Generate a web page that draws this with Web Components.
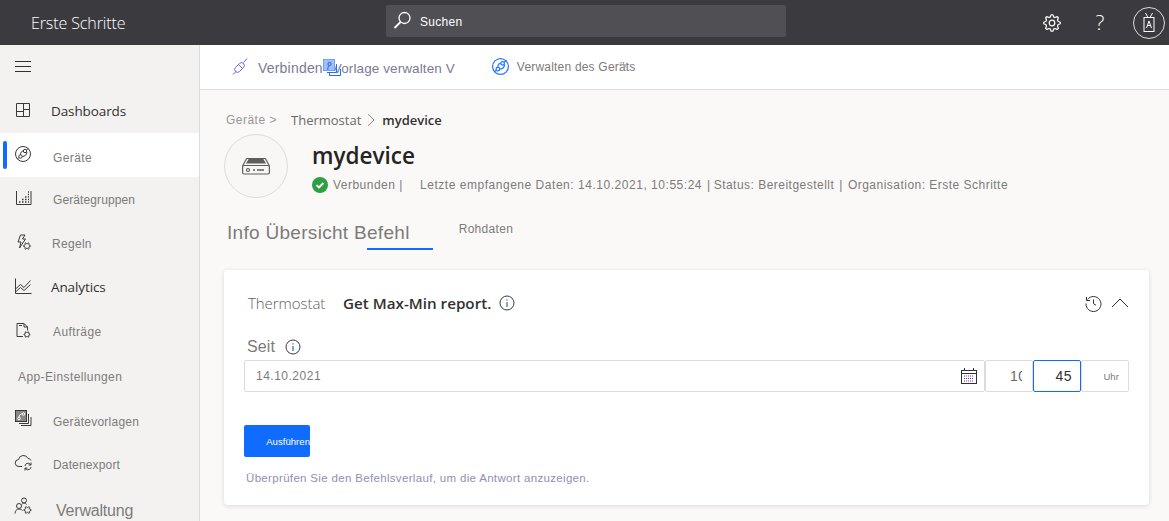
<!DOCTYPE html>
<html lang="de">
<head>
<meta charset="utf-8">
<title>Thermostat mydevice</title>
<style>
  html,body{ margin:0; height:100%; overflow:hidden; }
  body{ font-family:"Liberation Sans",Arial,sans-serif; background:#faf9f8; }
</style>
</head>
<body>
<app-shell>
  <app-header slot="header" title-text="Erste Schritte"></app-header>
  <side-nav slot="nav">
    <nav-item icon="dash" kind="main" pad="51">Dashboards</nav-item>
    <nav-item icon="device" active pad="53" drop="5">Geräte</nav-item>
    <nav-item icon="groups" pad="53" drop="2" style="letter-spacing:.1px">Gerätegruppen</nav-item>
    <nav-item icon="rules" pad="52" drop="2" style="letter-spacing:.3px">Regeln</nav-item>
    <nav-item icon="chart" kind="main" pad="51">Analytics</nav-item>
    <nav-item icon="jobs" pad="53" drop="2">Aufträge</nav-item>
    <nav-item kind="head" pad="18" drop="4">App-Einstellungen</nav-item>
    <nav-item icon="templates" pad="53" drop="5" style="letter-spacing:.25px">Gerätevorlagen</nav-item>
    <nav-item icon="export" pad="53" drop="4" style="letter-spacing:.15px">Datenexport</nav-item>
    <nav-item icon="admin" kind="big" pad="56" drop="7">Verwaltung</nav-item>
  </side-nav>
  <tool-bar slot="toolbar"></tool-bar>
  <device-head slot="main"></device-head>
  <tab-row slot="main"></tab-row>
  <command-card slot="main"></command-card>
</app-shell>

<script>
/* ============================================================
   Icons, thin line glyphs shared by the elements below
   ============================================================ */
// cog outline, teeth are plain arcs so it reads like the Fluent one
function gearPath(cx, cy, ro, ri, teeth){
  let d = "";
  for(let i = 0; i < teeth * 4; i++){
    const r = (i % 4 < 2) ? ro : ri;
    const a = (i - .5) / (teeth * 4) * Math.PI * 2;
    const x = (cx + Math.cos(a) * r).toFixed(2);
    const y = (cy + Math.sin(a) * r).toFixed(2);
    d += (i ? "L" : "M") + x + " " + y;
  }
  return d + "Z";
}
const DEVICE_GLYPH = `<circle cx="9" cy="9" r="7.500"/><circle cx="11" cy="6" r="1.700"/><circle cx="6.500" cy="11.500" r="1.700"/><path d="M9.300 6C7.500 6 6.500 7.500 6.500 9.800M8.200 11.500c2.500 0 4.300-1.300 4.800-4.500M12.600 5l2-1.800M5 12.600l-1.700 1.500"/>`;
const ICONS = {
  dash:`<path d="M2.500 2.500h13v13h-13zM9.500 2.500v13M9.500 8.500h6M2.500 10.500h7"/>`,
  device:DEVICE_GLYPH,
  groups:`<path d="M2.500 2v13.500h14.500V2"/><path d="M5 13h1.500M8 13h1.500M11 13h1.500M14 13h1M8 10.500h1.500M11 10.500h1.500M14 10.500h1M11 8h1.500M14 8h1M14 5.500h1M14 3h1" stroke-width="1.600"/>`,
  rules:`<path d="M6 2h4.500L8 6h3l-6 9 1.500-6H3.500z" transform="translate(.5 0)"/><path d="${gearPath(13, 13, 3.4, 2.3, 6)}"/>`,
  chart:`<path d="M1.500 1.500v15h16"/><path d="M1.500 12l5-4.500 3.500 3L16.500 3.500"/><path d="M1.500 15l5-4.500 3.500 3 6.500-6"/>`,
  jobs:`<path d="M9 15.500H3V2.500h7l3.500 3.500v3.500"/><path d="M10 2.500V6h3.500M5 4.500h3"/><path d="${gearPath(13, 13.5, 3, 2, 6)}"/>`,
  templates:`<rect x="1.500" y="1.500" width="11" height="11" fill="#8a8886"/><path d="M14.500 5v9.500H5M17 8v8.500H7"/><circle cx="9.500" cy="5" r="1.300" stroke="#fff"/><circle cx="5" cy="9.500" r="1.300" stroke="#fff"/><path d="M5 8c0-2 2-3 3.500-3.500" stroke="#fff"/>`,
  export:`<path d="M8 13.500H5a3.500 3.500 0 0 1-.5-7A5 5 0 0 1 14 5.500c1.500 0 2.500.8 3 2"/><path d="M11 13a3 3 0 0 1 5-2l1 1M17 14a3 3 0 0 1-5 2l-1-1M17 9.500V12h-2.500M11 17.500V15h2.500"/>`,
  admin:`<circle cx="10" cy="3.500" r="2.500"/><circle cx="5" cy="9" r="2.500"/><path d="M1 16.500c0-2.500 1.500-4.500 4-4.500 1.500 0 2.500.5 3.500 1.500M8 7.500c.5-1 1-1.500 2-1.500s2 .5 2.500 1.500"/><path d="${gearPath(13.5, 13, 3.6, 2.4, 6)}"/>`
};
function navIcon(name){
  return `<svg width="19" height="19" viewBox="0 0 19 19" fill="none" stroke="#3b3a39" stroke-width="1">${ICONS[name]||""}</svg>`;
}

/* ============================================================
   Page frame
   ============================================================ */
class AppShell extends HTMLElement{
  constructor(){
    super();
    this.attachShadow({mode:"open"});
    this.shadowRoot.innerHTML = `
      <style>
        :host{ display:grid; grid-template-columns:200px 1fr; grid-template-rows:45px 1fr; width:1169px; height:521px; overflow:hidden; }
        .h{ grid-column:1 / 3; }
        .n{ overflow:hidden; min-height:0; }
        .r{ display:flex; flex-direction:column; min-width:0; min-height:0; overflow:hidden; }
        .m{ padding:0 20px 0 24px; }
      </style>
      <div class="h"><slot name="header"></slot></div>
      <div class="n"><slot name="nav"></slot></div>
      <div class="r">
        <slot name="toolbar"></slot>
        <div class="m"><slot name="main"></slot></div>
      </div>`;
  }
}
customElements.define("app-shell", AppShell);

class AppHeader extends HTMLElement{
  constructor(){
    super();
    this.attachShadow({mode:"open"});
    this.shadowRoot.innerHTML = `
      <style>
        :host{ display:flex; align-items:center; height:45px; background:#3b3a3f; color:#fff; position:relative; }
        .t{ font:300 16px "Open Sans",sans-serif; width:386px; padding-left:31px; box-sizing:border-box; letter-spacing:-.1px; }
        .s{ width:400px; height:32px; margin-top:-4px; background:#504f54; border-radius:2px; display:flex; align-items:center; gap:7px; padding-left:6px; box-sizing:border-box; font:12px "Liberation Sans",sans-serif; letter-spacing:.3px; }
        .s span{ padding-top:2px; }
        .a{ margin-left:auto; display:flex; align-items:center; padding-right:4px; }
        .a > span{ display:flex; justify-content:center; align-items:center; }
        .g,.q{ width:48px; }
        .q{ font:300 21px "Open Sans",sans-serif; margin-top:-2px; }
        .av{ width:30px; height:30px; border:1px solid #ddd; border-radius:50%; margin-left:9px; }
      </style>
      <div class="t"></div>
      <div class="s">
        <svg width="21" height="21" viewBox="0 0 21 21" fill="none" stroke="#fff" stroke-width="1.300"><circle cx="12.500" cy="8" r="5.500"/><path d="M8.500 12L2.500 18" stroke-width="1.800"/></svg>
        <span>Suchen</span>
      </div>
      <div class="a">
        <span class="g">
          <svg width="20" height="20" viewBox="0 0 20 20" fill="none" stroke="#fff" stroke-width="1.200" stroke-linejoin="round"><circle cx="10" cy="10" r="2.800"/><path d="${gearPath(10, 10, 8.300, 6.200, 8)}"/></svg>
        </span>
        <span class="q">?</span>
        <span class="av">
          <svg width="14" height="20" viewBox="0 0 14 20" fill="none" stroke="#fff" stroke-width="1"><rect x="2" y="4.500" width="10" height="14"/><path d="M3.500 0l2.500 4.500M10.500 0L8 4.500M4.500 15l2.500-7 2.500 7M5.500 12.500h3"/></svg>
        </span>
      </div>`;
    this.shadowRoot.querySelector(".t").textContent = this.getAttribute("title-text");
  }
}
customElements.define("app-header", AppHeader);

/* ============================================================
   Left navigation
   ============================================================ */
class SideNav extends HTMLElement{
  constructor(){
    super();
    this.attachShadow({mode:"open"});
    this.shadowRoot.innerHTML = `
      <style>
        :host{ display:block; width:200px; height:476px; box-sizing:border-box; background:#f3f2f1; border-right:1px solid #dcdcdc; overflow:hidden; }
        .b{ height:44px; display:flex; flex-direction:column; justify-content:center; gap:4px; padding:0 0 1px 15px; box-sizing:border-box; }
        .b i{ display:block; width:16px; height:1px; background:#323130; }
      </style>
      <div class="b"><i></i><i></i><i></i></div>
      <slot></slot>`;
  }
}
customElements.define("side-nav", SideNav);

class NavItem extends HTMLElement{
  constructor(){
    super();
    this.attachShadow({mode:"open"});
    const ic = this.getAttribute("icon");
    this.shadowRoot.innerHTML = `
      <style>
        :host{ display:flex; align-items:center; height:44px; position:relative; color:#7d7b79; font:12px "Liberation Sans",sans-serif; letter-spacing:.4px; white-space:nowrap; }
        :host([active]){ background:#fff; }
        :host([active]) .bar{ display:block; }
        :host([kind=main]){ color:#323130; font:13.500px "Open Sans",sans-serif; letter-spacing:-.1px; }
        :host([kind=big]){ font:16px "Liberation Sans",sans-serif; letter-spacing:-.2px; }
        .bar{ display:none; position:absolute; left:3px; top:8px; width:4px; height:28px; border-radius:2px; background:#0f6cff; }
        .i{ position:absolute; left:14px; top:12px; display:flex; }
        .x{ padding-left:var(--p); padding-top:var(--d,0); }
      </style>
      <span class="bar"></span>
      ${ic ? `<span class="i">${navIcon(ic)}</span>` : ""}
      <span class="x"><slot></slot></span>`;
    const x = this.shadowRoot.querySelector(".x");
    x.style.setProperty("--p", this.getAttribute("pad") + "px");
    x.style.setProperty("--d", (this.getAttribute("drop") || 0) + "px");
  }
}
customElements.define("nav-item", NavItem);

/* ============================================================
   Command bar
   ============================================================ */
class ToolBar extends HTMLElement{
  constructor(){
    super();
    this.attachShadow({mode:"open"});
    this.shadowRoot.innerHTML = `
      <style>
        :host{ display:flex; align-items:center; height:45px; box-sizing:border-box; flex:none; background:#fff; border-bottom:1px solid #dcdcdc; padding-left:32px; color:#7b7a96; white-space:nowrap; position:relative; }
        .big{ font:14px "Liberation Sans",sans-serif; letter-spacing:.2px; margin-left:10px; padding-top:2px; }
        .tail{ font:13.500px "Liberation Sans",sans-serif; letter-spacing:.1px; margin-left:10px; padding-top:2px; }
        .over{ position:absolute; left:123px; top:14px; }
        .w{ margin-left:36px; display:flex; align-items:center; gap:7px; color:#7d7b79; font:12px "Liberation Sans",sans-serif; letter-spacing:.2px; margin-top:-1px; }
        .mark{ position:absolute; left:419px; top:18px; }
      </style>
      <svg width="16" height="18" viewBox="0 0 16 18" fill="none" stroke="#5f5fff" stroke-width="1"><path d="M1 16.500l3-3M11.500 4.500l3.500-4"/><path d="M3.500 9.500l4-4a2.800 2.800 0 0 1 4 4l-4 4a2.800 2.800 0 0 1-4-4zM6.500 6.500l4 4"/></svg>
      <span class="big">Verbinden</span><span class="tail">Vorlage verwalten V</span>
      <svg class="over" width="19" height="18" viewBox="0 0 19 18" fill="none"><rect x="0.500" y="0.500" width="11" height="11" fill="#9dbfff" stroke="#6f9fff"/><path d="M13.500 5v8.500H4M17.500 10v6.500H6.500V13.500" stroke="#1f6fff"/><circle cx="6.500" cy="5" r="1.600" stroke="#1f5fd0"/><path d="M6 7c-1 1-1.500 2-1 4" stroke="#1f5fd0"/></svg>
      <span class="w">
        <svg width="19" height="19" viewBox="0 0 18 18" fill="none" stroke="#2a78ff" stroke-width="1.200">${DEVICE_GLYPH}</svg>
        <span>Verwalten des Geräts</span>
      </span>
      <svg class="mark" width="9" height="6" viewBox="0 0 9 6" fill="none" stroke-width="1"><path d="M0 1l4 1M4 0l4 5" stroke="#8fb7c9"/><path d="M8 0L4 5" stroke="#c29a8f"/></svg>`;
  }
}
customElements.define("tool-bar", ToolBar);

/* ============================================================
   Device head and tabs
   ============================================================ */
class DeviceHead extends HTMLElement{
  constructor(){
    super();
    this.attachShadow({mode:"open"});
    this.shadowRoot.innerHTML = `
      <style>
        :host{ display:block; color:#7d7b79; font:12px "Liberation Sans",sans-serif; letter-spacing:.48px; white-space:nowrap; }
        .crumb{ display:flex; align-items:center; height:14px; margin:23px 0 0 2px; }
        .crumb .a{ color:#9a9896; width:65px; }
        .crumb .b{ color:#6b6967; font:13px "Open Sans",sans-serif; letter-spacing:0; }
        .crumb svg{ margin:0 6px 0 6px; }
        .crumb b{ color:#323130; font:600 13px "Open Sans",sans-serif; letter-spacing:0; }
        .row{ display:flex; margin-top:7px; }
        .pic{ width:64px; height:64px; box-sizing:border-box; border:1px solid #dedcda; border-radius:50%; background:#f8f7f6; display:flex; align-items:center; justify-content:center; flex:none; }
        .txt{ margin-left:24px; padding-top:7px; }
        h1{ margin:0; font:600 22.500px/30px "Open Sans",sans-serif; color:#252423; letter-spacing:0; }
        .st{ display:flex; align-items:center; height:16px; margin-top:6px; }
        .ok{ margin-right:5px; display:flex; }
        .c{ width:87px; }
        .l{ letter-spacing:.53px; }
        .s1{ margin-left:5px; }
        .s2{ margin-left:3px; }
        .s3{ margin-left:5px; }
      </style>
      <div class="crumb">
        <span class="a">Geräte &gt;</span>
        <span class="b">Thermostat</span>
        <svg width="9" height="14" viewBox="0 0 9 14" fill="none" stroke="#8a8886"><path d="M1 1l6 6-6 6"/></svg>
        <b>mydevice</b>
      </div>
      <div class="row">
        <div class="pic">
          <svg width="28" height="18" viewBox="0 0 28 18" fill="none" stroke="#605e5c" stroke-width="1.200"><rect x="0.600" y="8.500" width="26.800" height="8.500" rx="1.500"/><path d="M.6 9l4-7.500h18.800l4 7.500" /><path d="M5 6l2-3.500h14l2 3.500z" fill="#605e5c"/><circle cx="6" cy="13" r="1.500"/><path d="M11 13h2M15 13h7" stroke-width="1.600"/></svg>
        </div>
        <div class="txt">
          <h1>mydevice</h1>
          <div class="st">
            <span class="ok"><svg width="16" height="16" viewBox="0 0 16 16"><circle cx="8" cy="8" r="8" fill="#2f9e44"/><path d="M4.500 8.200l2.400 2.300 4.500-4.500" fill="none" stroke="#fff" stroke-width="1.800"/></svg></span>
            <span class="c">Verbunden |</span>
            <span class="l">Letzte empfangene Daten: 14.10.2021, 10:55:24</span>
            <span class="s1">|</span><span class="s2">Status: Bereitgestellt</span>
            <span class="s3">|</span><span class="s3">Organisation: Erste Schritte</span>
          </div>
        </div>
      </div>`;
  }
}
customElements.define("device-head", DeviceHead);

class TabRow extends HTMLElement{
  constructor(){
    super();
    this.attachShadow({mode:"open"});
    this.shadowRoot.innerHTML = `
      <style>
        :host{ display:flex; align-items:flex-start; height:54px; margin-top:23px; color:#7d7b79; font:19px/24px "Liberation Sans",sans-serif; letter-spacing:.3px; white-space:nowrap; position:relative; padding-left:3px; }
        .raw{ font:12px/18px "Liberation Sans",sans-serif; letter-spacing:.3px; margin-left:49px; margin-top:-1px; }
        .line{ position:absolute; left:143px; top:27px; width:66px; height:2px; background:#0f6cff; }
      </style>
      <span>Info Übersicht Befehl</span>
      <span class="raw">Rohdaten</span>
      <span class="line"></span>`;
  }
}
customElements.define("tab-row", TabRow);

/* ============================================================
   Command card
   ============================================================ */
class CommandCard extends HTMLElement{
  constructor(){
    super();
    this.attachShadow({mode:"open"});
    this.shadowRoot.innerHTML = `
      <style>
        :host{ display:block; height:235px; box-sizing:border-box; background:#fff; border-radius:4px; box-shadow:0 1px 5px rgba(0,0,0,.13); padding:23px 20px 0 20px; color:#7d7b79; font:12px "Liberation Sans",sans-serif; white-space:nowrap; margin-top:-5px; }
        .top{ display:flex; align-items:center; height:20px; padding-left:4px; }
        .th{ font:300 15px "Open Sans",sans-serif; color:#605e5c; width:95px; letter-spacing:-.05px; }
        .cmd{ font:600 15.200px "Open Sans",sans-serif; color:#323130; margin-right:8px; }
        .r{ margin-left:auto; display:flex; align-items:center; gap:9px; }
        .lab{ display:flex; align-items:center; gap:10px; height:20px; margin-top:24px; padding-left:3px; font:16px "Liberation Sans",sans-serif; letter-spacing:.1px; }
        .fld{ display:flex; margin-top:3px; }
        .box{ height:32px; box-sizing:border-box; border:1px solid #dcdcdc; border-radius:2px; display:flex; align-items:center; background:#fff; letter-spacing:.5px; }
        .d{ width:741px; padding:0 7px 0 11px; justify-content:space-between; }
        .hh{ width:48px; justify-content:flex-end; overflow:hidden; padding-right:10px; color:#6b6967; font-size:14px; }
        .hh span{ width:12px; overflow:hidden; }
        .mm{ width:48px; justify-content:flex-end; padding-right:8px; border:1px solid #0f6cff; color:#323130; font-size:14px; }
        .u{ width:48px; justify-content:flex-end; padding-right:9px; font-size:9.500px; letter-spacing:.1px; }
        .go{ display:flex; align-items:center; justify-content:flex-end; width:66px; height:32px; margin-top:33px; background:#0f6cff; border-radius:2px; color:#fff; font-size:9.500px; letter-spacing:.05px; }
        .hint{ margin:15px 0 0 2px; color:#8f8fb5; font-size:11.500px; letter-spacing:.33px; }
      </style>
      <div class="top">
        <span class="th">Thermostat</span>
        <span class="cmd">Get Max-Min report.</span>
        <info-dot></info-dot>
        <span class="r">
          <svg width="17" height="17" viewBox="0 0 17 17" fill="none" stroke="#323130"><path d="M2.500 4.500A7.500 7.500 0 1 1 1 8.500"/><path d="M1.500 2v3.500H5M8.500 4.500v4.200l2.500 1.500"/></svg>
          <svg width="18" height="10" viewBox="0 0 18 10" fill="none" stroke="#323130"><path d="M1 9l8-8 8 8"/></svg>
        </span>
      </div>
      <div class="lab">Seit <info-dot></info-dot></div>
      <div class="fld">
        <div class="box d">
          <span>14.10.2021</span>
          <svg width="16" height="16" viewBox="0 0 16 16" fill="none" stroke="#323130"><rect x="0.500" y="2.500" width="15" height="13"/><path d="M0.500 5.500h15M3.500 0v3M12.500 0v3"/><path d="M3 8h10M3 10.500h10M3 13h10" stroke="#7a2f8f" stroke-dasharray="1 1"/></svg>
        </div>
        <div class="box hh"><span>10</span></div>
        <div class="box mm">45</div>
        <div class="box u">Uhr</div>
      </div>
      <div class="go">Ausführen</div>
      <div class="hint">Überprüfen Sie den Befehlsverlauf, um die Antwort anzuzeigen.</div>`;
  }
}
customElements.define("command-card", CommandCard);

class InfoDot extends HTMLElement{
  constructor(){
    super();
    this.attachShadow({mode:"open"});
    this.shadowRoot.innerHTML = `
      <style>:host{ display:inline-flex; }</style>
      <svg width="16" height="16" viewBox="0 0 16 16" fill="none" stroke="#3b3a39"><circle cx="8" cy="8" r="7"/><path d="M8 7v5M8 4.200v1.300" stroke="#2c6fa8" stroke-width="1.200"/></svg>`;
  }
}
customElements.define("info-dot", InfoDot);
</script>
</body>
</html>
